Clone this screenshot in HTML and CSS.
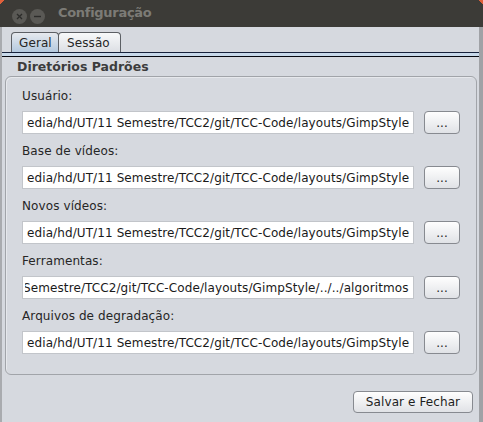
FILE: index.html
```html
<!DOCTYPE html>
<html lang="pt">
<head>
<meta charset="utf-8">
<title>Configuração</title>
<link rel="stylesheet" href="styles.css">
</head>
<body>
<div class="window">
  <div class="titlebar">
    <span class="wbtn">
      <svg width="15" height="15" viewBox="0 0 15 15"><circle cx="7.5" cy="7.5" r="7.5" fill="#5a5955"/><path d="M5 5 L10 10 M10 5 L5 10" stroke="#2c2c2a" stroke-width="1.3" fill="none"/></svg>
    </span>
    <span class="wbtn">
      <svg width="15" height="15" viewBox="0 0 15 15"><circle cx="7.5" cy="7.5" r="7.5" fill="#5a5955"/><path d="M4 7.5 L11 7.5" stroke="#2c2c2a" stroke-width="1.4" fill="none"/></svg>
    </span>
    <span class="title">Configuração</span>
  </div>
  <div class="content">
    <div class="tabs">
      <div class="tab tab-active">Geral</div>
      <div class="tab tab-second">Sessão</div>
    </div>
    <div class="tabline"></div>
    <div class="group-title">Diretórios Padrões</div>
    <div class="panel">
      <div class="row">
        <div class="label">Usuário:</div>
        <div class="field-line">
          <div class="field"><span class="txt">edia/hd/UT/11 Semestre/TCC2/git/TCC-Code/layouts/GimpStyle</span></div>
          <div class="btn dots">...</div>
        </div>
      </div>
      <div class="row">
        <div class="label">Base de vídeos:</div>
        <div class="field-line">
          <div class="field"><span class="txt">edia/hd/UT/11 Semestre/TCC2/git/TCC-Code/layouts/GimpStyle</span></div>
          <div class="btn dots">...</div>
        </div>
      </div>
      <div class="row">
        <div class="label">Novos vídeos:</div>
        <div class="field-line">
          <div class="field"><span class="txt">edia/hd/UT/11 Semestre/TCC2/git/TCC-Code/layouts/GimpStyle</span></div>
          <div class="btn dots">...</div>
        </div>
      </div>
      <div class="row">
        <div class="label">Ferramentas:</div>
        <div class="field-line">
          <div class="field"><span class="txt txt-scrolled">Semestre/TCC2/git/TCC-Code/layouts/GimpStyle/../../algoritmos</span></div>
          <div class="btn dots">...</div>
        </div>
      </div>
      <div class="row">
        <div class="label">Arquivos de degradação:</div>
        <div class="field-line">
          <div class="field"><span class="txt">edia/hd/UT/11 Semestre/TCC2/git/TCC-Code/layouts/GimpStyle</span></div>
          <div class="btn dots">...</div>
        </div>
      </div>
    </div>
    <div class="footer">
      <div class="btn save">Salvar e Fechar</div>
    </div>
  </div>
</div>
</body>
</html>
```
FILE: styles.css
```css
* { box-sizing: border-box; }
html, body { margin: 0; padding: 0; }
body {
  width: 483px;
  height: 422px;
  overflow: hidden;
  font-family: "DejaVu Sans", "Liberation Sans", sans-serif;
  font-size: 12px;
  line-height: 14px;
  letter-spacing: 0.1px;
  color: #262626;
  background: #d6d9df;
}
.window {
  width: 483px;
  height: 422px;
  display: flex;
  flex-direction: column;
  background: #d6d9df;
  overflow: hidden;
}
.titlebar {
  height: 27px;
  flex: none;
  display: flex;
  align-items: flex-start;
  padding-left: 12px;
  background:
    linear-gradient(135deg, #e0603a 0 3px, transparent 3px),
    linear-gradient(225deg, #e0603a 0 3px, transparent 3px),
    #3c3b37;
}
.wbtn {
  width: 15px;
  height: 15px;
  margin-top: 9px;
  margin-right: 3px;
  display: block;
}
.wbtn svg { display: block; }
.title {
  margin-left: 10px;
  margin-top: 5px;
  font-weight: bold;
  font-size: 13px;
  line-height: 15px;
  letter-spacing: -0.3px;
  color: #7c7b76;
}
.content {
  flex: 1;
  display: flex;
  flex-direction: column;
  border-left: 2px solid #a9abaf;
  border-right: 4px solid #a0a2a6;
}
.tabs {
  display: flex;
  height: 20px;
  margin-top: 5px;
  padding-left: 9px;
}
.tab {
  height: 20px;
  border: 1px solid #5c5f64;
  border-bottom: none;
  border-radius: 4px 4px 0 0;
  padding: 3px 0 0 7px;
  background: linear-gradient(#f8f9fa, #dcdfe4);
}
.tab-active {
  width: 48px;
  background: linear-gradient(#e6e9ee, #b4c9de);
}
.tab-second {
  width: 63px;
  margin-left: -1px;
  padding-left: 8px;
}
.tabline {
  height: 5px;
  background: #c8d9ea;
  border-top: 1px solid #17223c;
  border-bottom: 1px solid #06080f;
}
.group-title {
  margin: 2px 0 2px 15px;
  font-weight: bold;
  font-size: 12.5px;
  line-height: 15px;
  letter-spacing: 0;
  color: #3c3c3c;
}
.panel {
  margin: 0 2px 0 3px;
  border: 1px solid #a1a4a9;
  border-radius: 6px;
  padding: 12px 17px 20px 16px;
  box-shadow: inset 1px 1px 0 #e6e8ec;
  display: flex;
  flex-direction: column;
  gap: 10px;
}
.row {
  display: flex;
  flex-direction: column;
}
.label {
  height: 14px;
}
.field-line {
  display: flex;
  gap: 10px;
  margin-top: 8px;
  height: 23px;
}
.field {
  width: 392px;
  flex: none;
  height: 23px;
  background: #ffffff;
  border: 1px solid #c2c5ca;
  padding: 0 3px 0 2px;
  display: flex;
  align-items: center;
}
.txt {
  flex: 1;
  min-width: 0;
  overflow: hidden;
  white-space: nowrap;
  padding-left: 2px;
  line-height: 14px;
  color: #1a1a1a;
}
.txt-scrolled { text-indent: -4px; }
.btn {
  border: 1px solid #878a90;
  border-radius: 4px;
  background: linear-gradient(#fefefe, #e0e2e6);
  display: flex;
  align-items: center;
  justify-content: center;
  line-height: 14px;
  color: #1e1e1e;
}
.dots {
  width: 36px;
  height: 23px;
  flex: none;
}
.footer {
  display: flex;
  justify-content: flex-end;
  margin-top: 16px;
  padding-right: 6px;
}
.save {
  width: 120px;
  height: 22px;
}
```
